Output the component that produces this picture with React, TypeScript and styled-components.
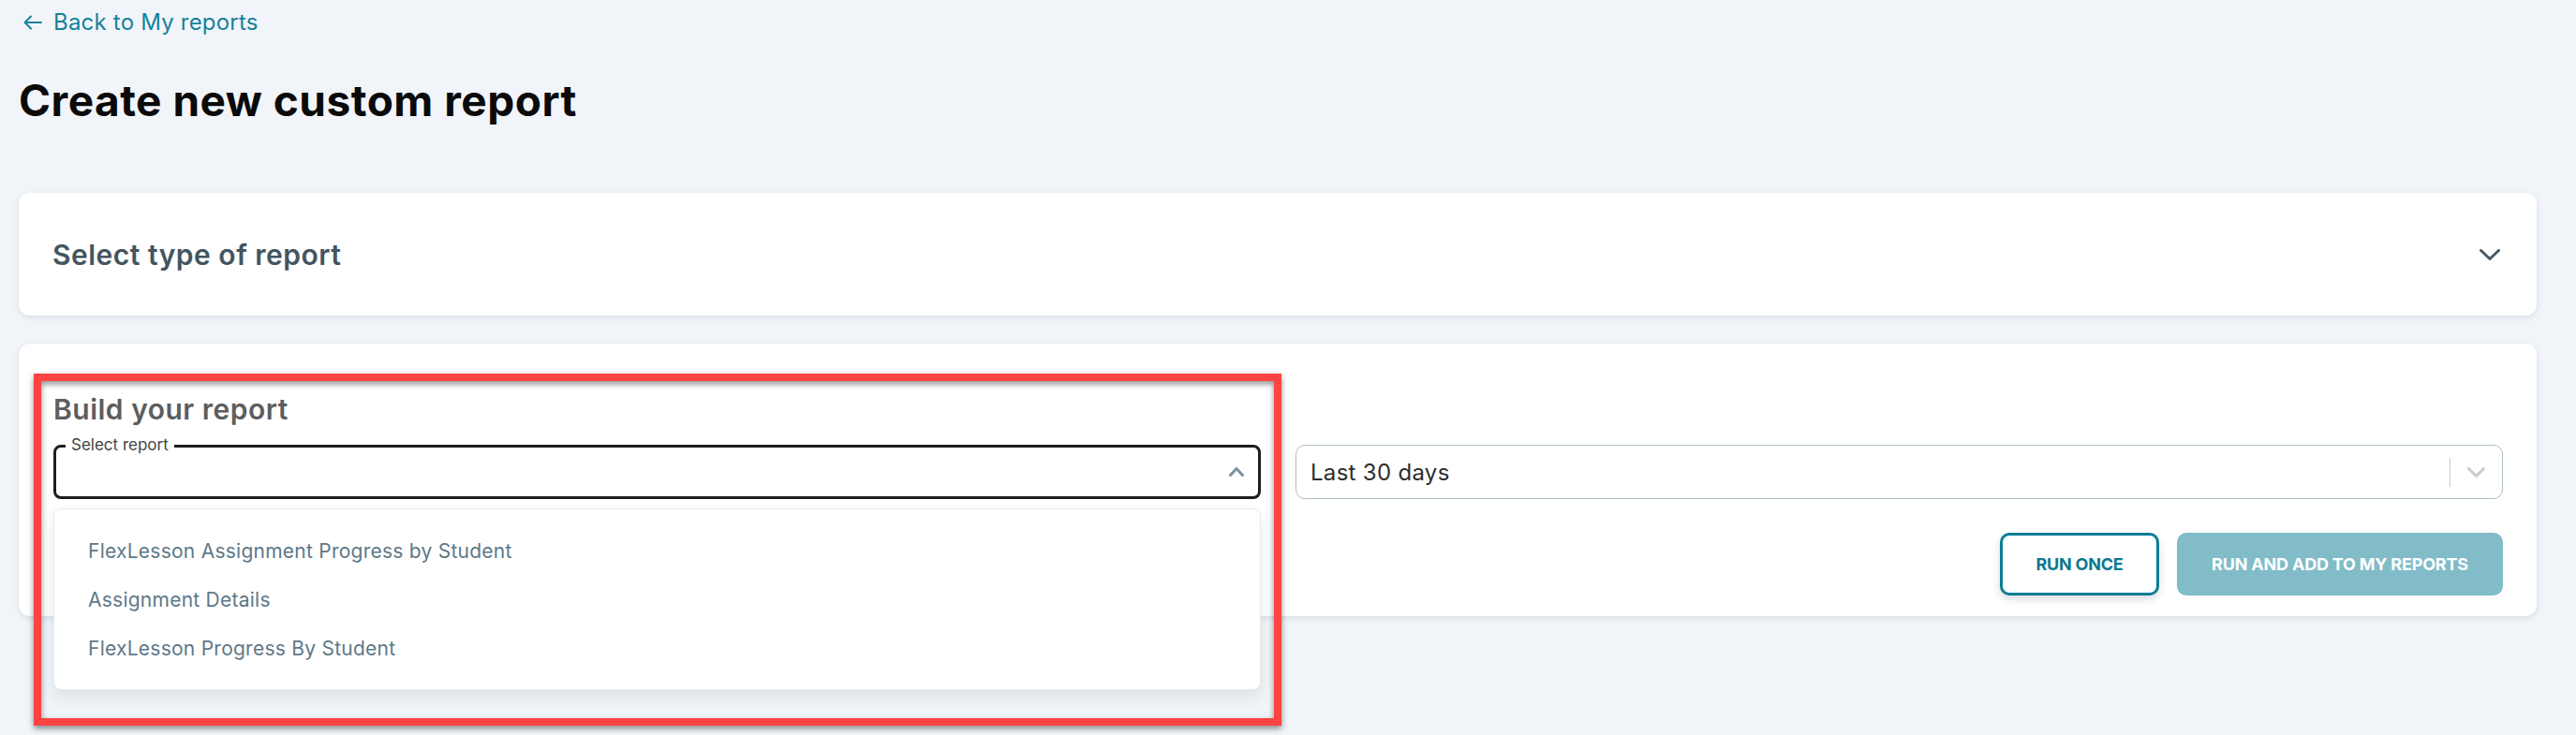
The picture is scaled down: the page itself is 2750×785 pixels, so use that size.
import React from "react";
import styled, { createGlobalStyle } from "styled-components";

const GlobalStyle = createGlobalStyle`
  html, body { margin: 0; padding: 0; background: #f1f5f9; }
  body { font-family: Inter, "Noto Sans", sans-serif; }
  * { box-sizing: border-box; }
`;

const Page = styled.div`
  position: relative;
  min-height: 785px;
  padding: 8px 42px 0 20px;
`;

const BackLink = styled.a`
  display: inline-flex;
  align-items: center;
  gap: 12px;
  margin-left: 5px;
  font-size: 24px;
  line-height: 32px;
  letter-spacing: 0.2px;
  color: #16819b;
  text-decoration: none;
`;

const Title = styled.h1`
  margin: 40px 0 0 0;
  font-size: 46px;
  line-height: 54px;
  font-weight: 700;
  color: #0a0a0a;
  letter-spacing: 0.5px;
`;

const Card = styled.section<{ $mt: number }>`
  margin-top: ${(p) => p.$mt}px;
  background: #fff;
  border-radius: 12px;
  box-shadow: 0 2px 6px rgba(40, 60, 80, 0.13);
`;

const AccordionHeader = styled.div`
  height: 131px;
  display: flex;
  align-items: center;
  justify-content: space-between;
  padding: 0 39px 0 36px;
`;

const CardTitle = styled.h2<{ $color: string }>`
  margin: 0;
  font-size: 30px;
  line-height: 36px;
  font-weight: 600;
  color: ${(p) => p.$color};
  letter-spacing: 0.5px;
`;

const BuildBody = styled.div`
  padding: 52px 36px 22px 37px;
`;

const FieldRow = styled.div`
  display: grid;
  grid-template-columns: 1fr 1fr;
  gap: 37px;
  margin-top: 20px;
`;

const SelectWrap = styled.div`
  position: relative;
`;

const OutlinedSelect = styled.div`
  position: relative;
  height: 58px;
  border: 3px solid #1e1e1e;
  border-radius: 8px;
  display: flex;
  align-items: center;
  justify-content: flex-end;
  padding-right: 15px;
`;

const FloatingLabel = styled.span`
  position: absolute;
  left: 10px;
  top: -13px;
  padding: 0 6px;
  background: #fff;
  font-size: 17px;
  line-height: 20px;
  color: #444;
`;

const Menu = styled.ul`
  position: absolute;
  left: 0;
  right: 0;
  top: calc(100% + 10px);
  margin: 0;
  padding: 18px 0 18px;
  list-style: none;
  background: #fff;
  border: 1px solid #e6ebee;
  border-radius: 8px;
  box-shadow: 0 8px 16px rgba(40, 60, 90, 0.1);
  z-index: 2;
`;

const MenuItem = styled.li`
  height: 52px;
  display: flex;
  align-items: center;
  padding-left: 36px;
  font-size: 21px;
  letter-spacing: 0.25px;
  color: #5e7888;
`;

const PlainSelect = styled.div`
  height: 58px;
  border: 1px solid #aebfc6;
  border-radius: 10px;
  display: flex;
  align-items: center;
  padding: 0 18px 0 15px;
`;

const SelectValue = styled.span`
  flex: 1;
  font-size: 24px;
  letter-spacing: 0.3px;
  color: #2d2d2d;
`;

const Separator = styled.span`
  width: 1px;
  height: 31px;
  background: #cccccc;
  margin-right: 18px;
`;

const ButtonRow = styled.div`
  display: flex;
  justify-content: flex-end;
  gap: 19px;
  margin-top: 36px;
`;

const Button = styled.button<{ $variant: "outline" | "solid" }>`
  height: 67px;
  border-radius: 10px;
  font-family: Inter, "Noto Sans", sans-serif;
  font-size: 18px;
  font-weight: 700;
  letter-spacing: -0.2px;
  cursor: pointer;
  ${(p) =>
    p.$variant === "outline"
      ? `
    width: 170px;
    background: #fff;
    color: #0b7891;
    border: 3px solid #0b7d96;
    box-shadow: 0 4px 8px rgba(0, 0, 0, 0.14);
  `
      : `
    width: 348px;
    background: #81bcc8;
    color: #fff;
    border: none;
  `}
`;

const Annotation = styled.div`
  position: absolute;
  left: 36px;
  top: 399px;
  width: 1332px;
  height: 376px;
  border: 8px solid #fe4343;
  filter: drop-shadow(0 3px 3px rgba(0, 0, 0, 0.45));
  pointer-events: none;
  z-index: 3;
`;

const Chevron = ({ up, color, w, h, sw }: { up?: boolean; color: string; w: number; h: number; sw: number }) => (
  <svg width={w} height={h} viewBox={`0 0 ${w} ${h}`} fill="none">
    <polyline
      points={
        up
          ? `${sw / 2},${h - sw / 2} ${w / 2},${sw / 2} ${w - sw / 2},${h - sw / 2}`
          : `${sw / 2},${sw / 2} ${w / 2},${h - sw / 2} ${w - sw / 2},${sw / 2}`
      }
      stroke={color}
      strokeWidth={sw}
      strokeLinecap="round"
      strokeLinejoin="round"
    />
  </svg>
);

const BackArrow = () => (
  <svg width="20" height="16" viewBox="0 0 20 16" fill="none">
    <path d="M19 8H1.5M8 1.5L1.5 8L8 14.5" stroke="#16819b" strokeWidth="2" strokeLinecap="round" strokeLinejoin="round" />
  </svg>
);

export default function App() {
  return (
    <>
      <GlobalStyle />
      <Page>
        <BackLink href="#">
          <BackArrow />
          Back to My reports
        </BackLink>
        <Title>Create new custom report</Title>
        <Card $mt={72}>
          <AccordionHeader>
            <CardTitle $color="#43555f">Select type of report</CardTitle>
            <Chevron color="#455a64" w={22} h={12} sw={3} />
          </AccordionHeader>
        </Card>
        <Card $mt={30}>
          <BuildBody>
            <CardTitle $color="#5d5d5d">Build your report</CardTitle>
            <FieldRow>
              <SelectWrap>
                <OutlinedSelect>
                  <FloatingLabel>Select report</FloatingLabel>
                  <Chevron up color="#7b929e" w={16} h={10} sw={3} />
                </OutlinedSelect>
                <Menu>
                  <MenuItem>FlexLesson Assignment Progress by Student</MenuItem>
                  <MenuItem>Assignment Details</MenuItem>
                  <MenuItem>FlexLesson Progress By Student</MenuItem>
                </Menu>
              </SelectWrap>
              <PlainSelect>
                <SelectValue>Last 30 days</SelectValue>
                <Separator />
                <Chevron color="#cccccc" w={19} h={11} sw={3} />
              </PlainSelect>
            </FieldRow>
            <ButtonRow>
              <Button $variant="outline">RUN ONCE</Button>
              <Button $variant="solid">RUN AND ADD TO MY REPORTS</Button>
            </ButtonRow>
          </BuildBody>
        </Card>
        <Annotation />
      </Page>
    </>
  );
}
